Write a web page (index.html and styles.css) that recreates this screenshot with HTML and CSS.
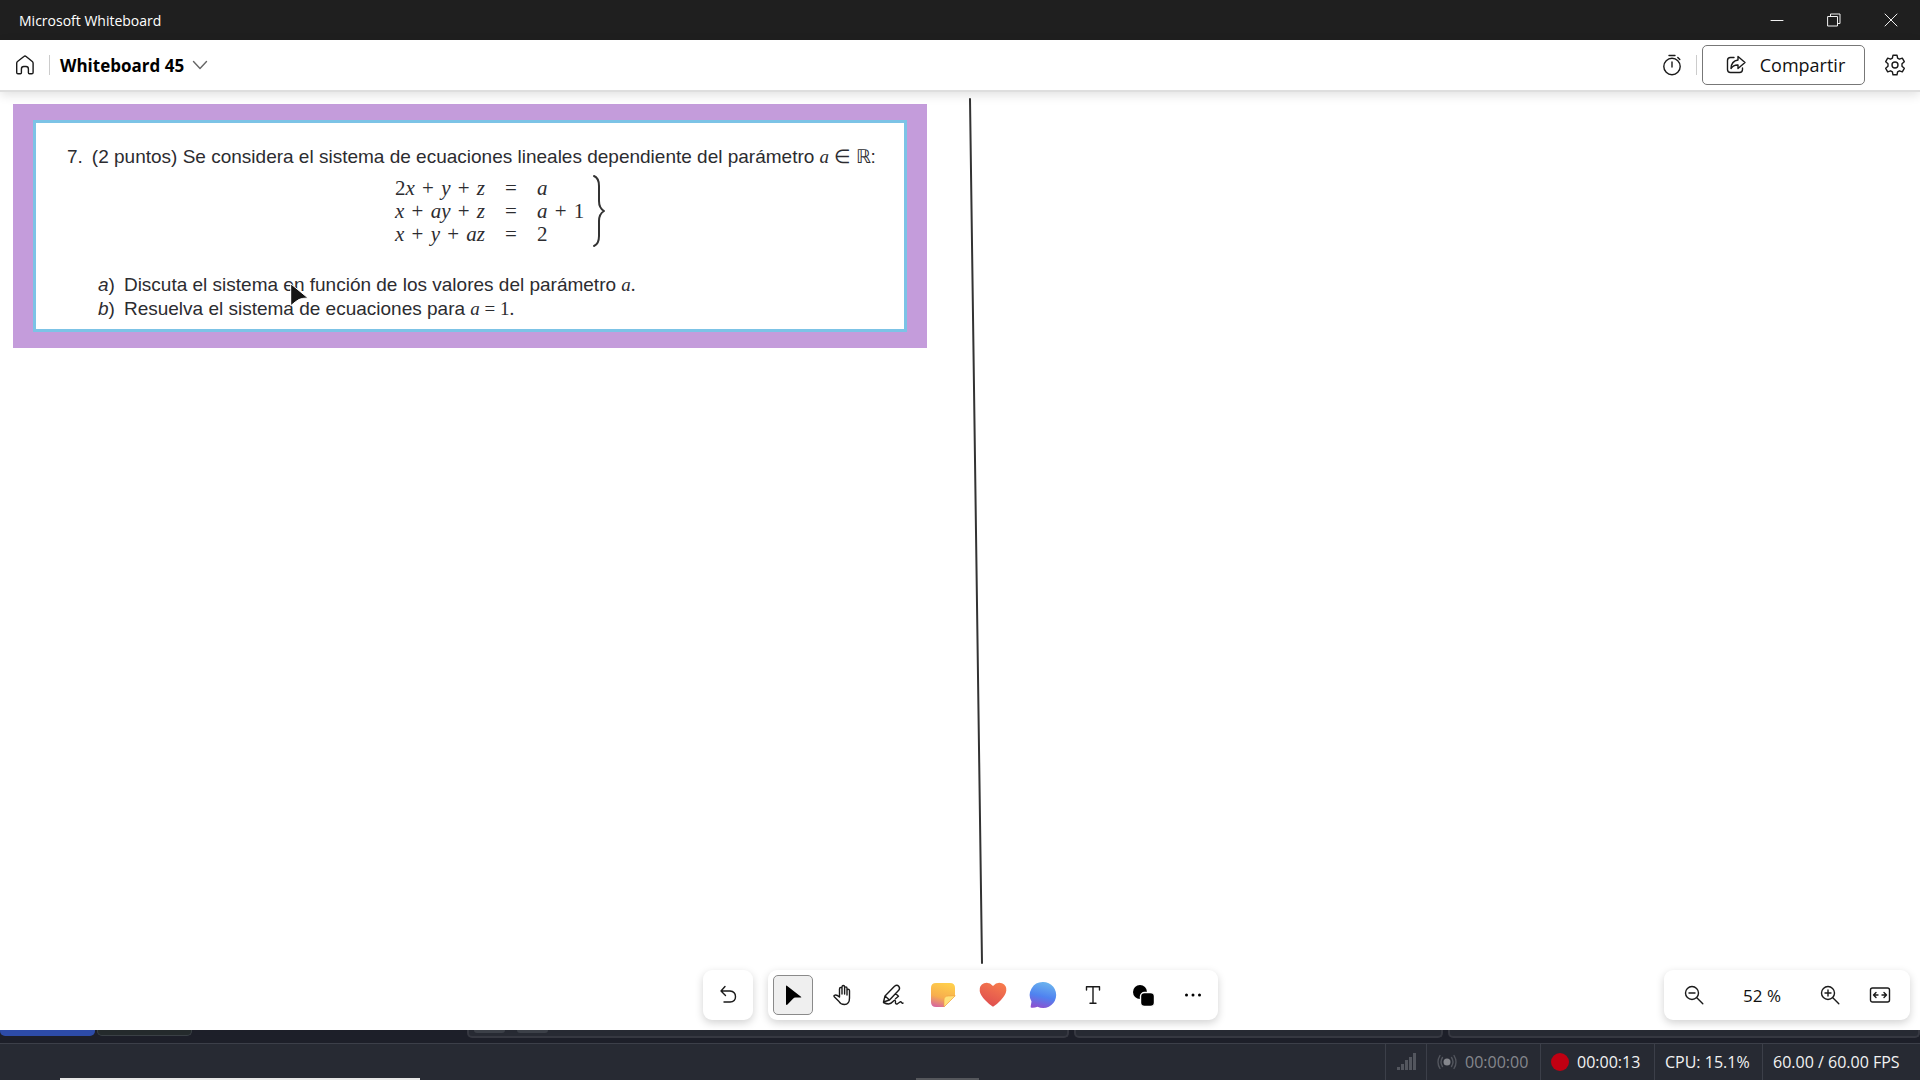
FILE: index.html
```html
<!DOCTYPE html>
<html lang="es">
<head>
<meta charset="utf-8">
<title>Microsoft Whiteboard</title>
<link rel="stylesheet" href="styles.css">
</head>
<body>
<div class="titlebar">
  <span class="app-name">Microsoft Whiteboard</span>
  <div class="window-controls">
    <button type="button" aria-label="Minimizar"><svg width="14" height="14" viewBox="0 0 14 14"><path d="M1 7.500h12"/></svg></button>
    <button type="button" aria-label="Restaurar"><svg width="14" height="14" viewBox="0 0 14 14"><path d="M1 3.500h9.500v9.500h-9.500zM3.500 3.500v-2.500h9.500v9.500h-2.500"/></svg></button>
    <button type="button" aria-label="Cerrar"><svg width="14" height="14" viewBox="0 0 14 14"><path d="M1 1l12 12M13 1L1 13"/></svg></button>
  </div>
</div>

<header class="header">
  <button class="icon-button" type="button" aria-label="Inicio"><svg width="20" height="20" viewBox="0 0 20 20"><path d="M1.700 8.200v9.300q0 1.300 1.300 1.300h2.400q1 0 1-1v-3.900q0-2.400 2.400-2.400h2.200q2.400 0 2.400 2.400v3.900q0 1 1 1h2.400q1.300 0 1.300-1.300v-9.300q0-1-.8-1.700l-6.200-5q-1.100-.9-2.200 0l-6.400 5q-.8.7-.8 1.700z"/></svg></button>
  <span class="separator"></span>
  <button class="board-name" type="button">Whiteboard 45 <svg width="16" height="16" viewBox="0 0 16 16"><path d="M1.500 4.500l6.500 7 6.500-7"/></svg></button>
  <div class="header-actions">
    <button class="icon-button" type="button" aria-label="Temporizador"><svg width="20" height="22" viewBox="0 0 20 22"><circle cx="10" cy="12.500" r="8.200"/><path d="M10 8v5M7 1.500h6M15.800 3.500l2 2"/></svg></button>
    <span class="separator"></span>
    <button class="share" type="button"><svg width="20" height="20" viewBox="0 0 20 20"><path d="M8 2.500H4.500q-3 0-3 3v9q0 3 3 3h9q3 0 3-3v-1.500M12 1.500l7 6-7 6v-3.500q-4.500-.3-7 3.500 .3-7.500 7-8.500z"/></svg>Compartir</button>
    <button class="icon-button" type="button" aria-label="Configuración"><svg width="22" height="22" viewBox="0 0 22 22"><path d="M9 1.200h4l.6 3 1.800 1 2.900-1 2 3.500-2.300 2v2.600l2.300 2-2 3.500-2.900-1-1.800 1-.6 3H9l-.6-3-1.800-1-2.900 1-2-3.500 2.300-2V9.700l-2.300-2 2-3.500 2.900 1 1.800-1z"/><circle cx="11" cy="11" r="3"/></svg></button>
  </div>
</header>

<main class="canvas">
  <article class="note">
    <div class="exercise">
      <p class="statement"><span>7.</span><span>(2 puntos) Se considera el sistema de ecuaciones lineales dependiente del parámetro <span class="math"><i>a</i> ∈ ℝ</span>:</span></p>
      <div class="system">
        <table class="equations">
          <tr><td>2<i>x</i> <span class="op">+</span> <i>y</i> <span class="op">+</span> <i>z</i></td><td>=</td><td><i>a</i></td></tr>
          <tr><td><i>x</i> <span class="op">+</span> <i>ay</i> <span class="op">+</span> <i>z</i></td><td>=</td><td><i>a</i> <span class="op">+</span> 1</td></tr>
          <tr><td><i>x</i> <span class="op">+</span> <i>y</i> <span class="op">+</span> <i>az</i></td><td>=</td><td>2</td></tr>
        </table>
        <svg class="brace" width="12" height="72" viewBox="0 0 12 72"><path d="M1 1q5 2 5 10v15q0 7 5 10q-5 3-5 10v15q0 8-5 10"/></svg>
      </div>
      <div class="questions">
        <p><span><i>a</i>)</span><span>Discuta el sistema en función de los valores del parámetro <span class="math"><i>a</i>.</span></span></p>
        <p><span><i>b</i>)</span><span>Resuelva el sistema de ecuaciones para <span class="math"><i>a</i> = 1.</span></span></p>
      </div>
    </div>
  </article>
  <svg class="stroke" width="16" height="868" viewBox="0 0 16 868"><path d="M2 1q2 200 6 433t6 431"/></svg>
  <svg class="pointer" width="20" height="24" viewBox="0 0 20 24"><path d="M1 1l17 14q-6 0-9 1.500t-8 6z"/></svg>

  <div class="tools">
    <div class="panel"><button class="tool" type="button" aria-label="Deshacer"><svg width="20" height="20" viewBox="0 0 20 20"><path d="M7 1.500L3 6l4.500 4.500M3 6h9q5.500.5 5.500 5.700 0 5-5.500 5.300H6"/></svg></button></div>
    <div class="panel">
      <button class="tool selected" type="button" aria-label="Seleccionar"><svg width="20" height="22" viewBox="0 0 20 22"><path class="solid" d="M3 2.500q0-1.500 1.200-.6L18 12.800q1 .8-.3.800h-5.200q-1.500 0-2.500 1.200l-5.500 5.700q-1.500 1-1.500-.6z"/></svg></button>
      <button class="tool" type="button" aria-label="Desplazar"><svg width="22" height="22" viewBox="0 0 22 22"><path d="M7.500 12.500V5q0-1.500 1.300-1.500T10 5v5V3q0-1.500 1.300-1.500T12.600 3v7V4.200q0-1.300 1.200-1.300T15 4.200V11 6.500q0-1.300 1.200-1.300t1.300 1.300V14q0 6.500-5 6.500-4 0-5.500-3L2.500 13q-1.300-1.500.3-1.800 1.800-.7 4.700 1.800z"/></svg></button>
      <button class="tool" type="button" aria-label="Entrada manuscrita"><svg width="22" height="22" viewBox="0 0 22 22"><path d="M1.500 18l1.500-6L12.500 2.300q2.500-2 4.200 0t0 4L7.500 16zM3 12l4.500 4M13.500 9.500l3 2.800-3 2.500M1.500 18.500q3 1.500 5 1.500 2.500-.2 4.500-2.500t2.500-.2q-.5 3.500 2 2.500l2.500-1.800q1-.5 1.500.5t1.500.5"/></svg></button>
      <button class="tool" type="button" aria-label="Notas"><svg width="24" height="24" viewBox="0 0 24 24"><defs><linearGradient id="sticky" x1=".6" y1="0" x2=".3" y2="1"><stop offset="0" stop-color="#ffce4b"/><stop offset=".6" stop-color="#f7ae4e"/><stop offset="1" stop-color="#d8699a"/></linearGradient></defs><path fill="url(#sticky)" stroke="none" d="M5 0h14q5 0 5 5v8l-11 11H5q-5 0-5-5V5q0-5 5-5z"/><path fill="#ffe17a" stroke="#f0a040" stroke-width=".6" d="M24 13l-11 11v-7q0-4 4-4z"/></svg></button>
      <button class="tool" type="button" aria-label="Reacciones"><svg width="28" height="26" viewBox="0 0 28 26"><defs><linearGradient id="heart" x1=".7" y1="0" x2=".2" y2="1"><stop offset="0" stop-color="#f67a4c"/><stop offset="1" stop-color="#dd4a50"/></linearGradient></defs><path fill="url(#heart)" stroke="none" d="M14 4q4-4.500 9-2.700 5 2.200 4.300 7.500-.5 4-5.300 9.200-4 4.400-8 6.800-4-2.400-8-6.800Q1.200 13 .700 9 0 3.500 5 1.300 10-.5 14 4z"/></svg></button>
      <button class="tool" type="button" aria-label="Comentarios"><svg width="26" height="26" viewBox="0 0 26 26"><defs><linearGradient id="bubble" x1=".6" y1="0" x2=".35" y2="1"><stop offset="0" stop-color="#6cb4ee"/><stop offset=".55" stop-color="#4f82f0"/><stop offset="1" stop-color="#8b52d0"/></linearGradient></defs><path fill="url(#bubble)" stroke="none" d="M13 0a13 13 0 1 1-5.500 24.700q-3 1.300-6 1-1.300-.2-.8-1.500l.8-4.700A13 13 0 0 1 13 0z"/></svg></button>
      <button class="tool" type="button" aria-label="Texto"><svg width="20" height="20" viewBox="0 0 20 20"><path d="M3.500 5V1.700h13V5M10 1.700v16.600M7 18.300h6"/></svg></button>
      <button class="tool" type="button" aria-label="Formas"><svg width="22" height="22" viewBox="0 0 22 22"><circle class="solid" cx="8" cy="8" r="7"/><rect class="solid outlined" x="8.500" y="8.500" width="14" height="14" rx="4"/></svg></button>
      <button class="tool" type="button" aria-label="Más opciones"><svg width="18" height="4" viewBox="0 0 18 4"><circle class="dot" cx="2.500" cy="2" r="1.500"/><circle class="dot" cx="9" cy="2" r="1.500"/><circle class="dot" cx="15.500" cy="2" r="1.500"/></svg></button>
    </div>
  </div>

  <div class="panel zoom">
    <button class="tool" type="button" aria-label="Alejar"><svg width="20" height="20" viewBox="0 0 20 20"><circle cx="8" cy="8" r="6.500"/><path d="M5 8h6M12.800 12.800l6 6"/></svg></button>
    <span class="zoom-level">52 %</span>
    <button class="tool" type="button" aria-label="Acercar"><svg width="20" height="20" viewBox="0 0 20 20"><circle cx="8" cy="8" r="6.500"/><path d="M5 8h6M8 5v6M12.800 12.800l6 6"/></svg></button>
    <button class="tool" type="button" aria-label="Ajustar a la pantalla"><svg width="22" height="18" viewBox="0 0 22 18"><rect x="1.500" y="2" width="19" height="14" rx="2"/><path d="M9 9H4.500M7 6.500L4.500 9 7 11.500M13 9h4.500M15 6.500L17.500 9 15 11.500"/></svg></button>
  </div>
</main>

<div class="dock-edge">
  <span class="edge-tab active"></span>
  <span class="edge-tab"></span>
  <div class="edge-docks">
    <span class="dock dock-mixer"><span class="chip"></span><span class="chip"></span></span>
    <span class="dock dock-transitions"></span>
    <span class="dock dock-controls"></span>
  </div>
</div>

<footer class="status">
  <span class="task-line"></span>
  <span class="task-handle"></span>
  <span class="cell cell-signal"><svg width="20" height="18" viewBox="0 0 20 18"><path d="M1 14h3v3H1zM5 11h3v6H5zM9 7h3v10H9zM13 4h3v13h-3zM17 0h3v17h-3z"/></svg></span>
  <span class="cell cell-timer muted"><svg width="20" height="16" viewBox="0 0 20 16"><circle class="core" cx="10" cy="8" r="3.500"/><path class="wave" d="M5.500 3.500q-3 4.500 0 9M14.500 3.500q3 4.500 0 9M3 1.500q-4 6.500 0 13M17 1.500q4 6.500 0 13"/></svg>00:00:00</span>
  <span class="cell cell-timer"><span class="record"></span>00:00:13</span>
  <span class="cell cell-cpu">CPU: 15.1%</span>
  <span class="cell cell-fps">60.00 / 60.00 FPS</span>
</footer>
</body>
</html>
```
FILE: styles.css
```css
* {
  box-sizing: border-box;
}

body {
  margin: 0;
  min-height: 100vh;
  display: flex;
  flex-direction: column;
  background: #fff;
  color: #111;
  font-family: "Open Sans", "Noto Sans", sans-serif;
}

button {
  display: flex;
  align-items: center;
  justify-content: center;
  margin: 0;
  padding: 0;
  border: 0;
  background: none;
  color: inherit;
  font: inherit;
}

p {
  margin: 0;
}

svg {
  display: block;
  flex: none;
  overflow: visible;
  fill: none;
  stroke: #1a1a1a;
  stroke-width: 1.4;
  stroke-linejoin: round;
  stroke-linecap: round;
}

/* Window title bar */
.titlebar {
  display: flex;
  align-items: center;
  justify-content: space-between;
  height: 40px;
  padding: 0 1px 0 19px;
  background: #1f1f1f;
  color: #fff;
  font-size: 14px;
}

.window-controls {
  display: flex;
}

.window-controls button {
  width: 57px;
  height: 40px;
}

.window-controls svg {
  stroke: #f0f0f0;
  stroke-width: 1;
}

/* Board header */
.header {
  position: relative;
  z-index: 1;
  display: flex;
  align-items: center;
  height: 52px;
  padding: 0 14px;
  border-bottom: 2px solid #dedede;
  background: #fff;
  box-shadow: 0 3px 10px rgba(0, 0, 0, 0.12);
}

.icon-button {
  width: 22px;
  height: 32px;
}

.separator {
  width: 1px;
  height: 20px;
  margin-left: 13px;
  background: #ccc;
}

.board-name {
  gap: 8px;
  margin-left: 10px;
  color: #000;
  font-size: 17px;
  font-weight: 700;
}

.board-name svg {
  stroke: #666;
}

.header-actions {
  display: flex;
  align-items: center;
  margin-left: auto;
}

.header-actions .separator {
  margin: 0 5px 0 13px;
}

.share {
  gap: 14px;
  width: 163px;
  height: 40px;
  margin-right: 19px;
  padding-left: 4px;
  border: 1px solid #777;
  border-radius: 5px;
  font-size: 18px;
}

/* Canvas objects */
.canvas {
  position: relative;
  flex: 1;
  overflow: hidden;
  background: #fff;
}

.note {
  position: absolute;
  top: 12px;
  left: 13px;
  padding: 16px 20px;
  background: #c49cdb;
}

.exercise {
  width: 874px;
  height: 212px;
  padding: 22px 31px 0;
  border: 3px solid #7cc3e6;
  background: #fff;
  color: #2c2c30;
  font-family: "Liberation Sans", sans-serif;
  font-size: 19px;
  line-height: 24px;
  white-space: nowrap;
}

.statement {
  display: flex;
  gap: 9px;
}

.math {
  font-family: "Liberation Serif", serif;
  line-height: 1;
}

.equations {
  border-collapse: collapse;
  font-family: "Liberation Serif", serif;
  font-size: 21px;
  line-height: 23px;
}

.equations td {
  padding: 0 20px 0 0;
}

.equations td:last-child {
  padding: 0;
}

.op {
  margin: 0 2px;
}

.system {
  display: flex;
  align-items: center;
  gap: 9px;
  padding: 6px 0 0 328px;
}

.brace {
  stroke: #333;
  stroke-width: 2;
}

.questions {
  padding: 26px 0 0 31px;
}

.questions p {
  display: flex;
  gap: 9px;
}

.stroke {
  position: absolute;
  top: 6px;
  left: 968px;
  stroke: #333;
  stroke-width: 2;
}

.pointer {
  position: absolute;
  top: 191px;
  left: 290px;
  fill: #151515;
  stroke: #fff;
  stroke-width: 1;
}

/* Floating toolbars */
.tools {
  position: absolute;
  right: 0;
  bottom: 10px;
  left: 1px;
  display: flex;
  justify-content: center;
  gap: 15px;
}

.panel {
  display: flex;
  align-items: center;
  gap: 10px;
  padding: 5px;
  border-radius: 9px;
  background: #fff;
  box-shadow: 0 3px 9px rgba(0, 0, 0, 0.18);
}

.tool {
  width: 40px;
  height: 40px;
  border-radius: 5px;
}

.selected {
  border: 1px solid #8a8a8a;
  background: #efefef;
}

.solid {
  fill: #000;
  stroke: none;
}

.outlined {
  stroke: #fff;
}

.dot {
  fill: #000;
  stroke: none;
}

.zoom {
  position: absolute;
  right: 10px;
  bottom: 10px;
  width: 246px;
  padding: 5px 10px;
}

.zoom-level {
  flex: 1;
  text-align: center;
  font-size: 17px;
}

/* Recorder window behind the board */
.dock-edge {
  display: flex;
  height: 13px;
  background: #1d1f29;
}

.edge-tab {
  width: 95px;
  height: 6px;
  margin-right: 2px;
  border: 1px solid #3a4045;
  border-top: 0;
  border-radius: 0 0 5px 5px;
  background: #242a2c;
}

.active {
  border: 0;
  background: #2d4ba8;
}

.edge-docks {
  flex: 1;
  display: flex;
  gap: 5px;
  margin-left: 273px;
}

.dock {
  display: flex;
  gap: 12px;
  height: 8px;
  padding-left: 5px;
  border: 2px solid #363841;
  border-top: 0;
  border-radius: 0 0 5px 5px;
  background: #272a33;
}

.dock-mixer {
  flex: 606;
}

.dock-transitions {
  flex: 367;
}

.dock-controls {
  flex: 473;
}

.chip {
  width: 31px;
  height: 3px;
  border-radius: 0 0 3px 3px;
  background: #3c4048;
}

.status {
  position: relative;
  display: flex;
  justify-content: flex-end;
  height: 37px;
  border-top: 1px solid #3c3f49;
  background: #272a33;
  color: #f2f2f2;
  font-size: 16px;
}

.cell {
  display: flex;
  align-items: center;
  gap: 8px;
  padding-left: 10px;
  border-left: 1px solid #3c3f49;
  white-space: nowrap;
}

.cell-signal {
  width: 41px;
}

.cell-timer {
  width: 114px;
}

.cell-cpu {
  width: 108px;
}

.cell-fps {
  width: 158px;
}

.cell svg {
  fill: #53565e;
  stroke: none;
}

.muted {
  color: #85878d;
}

.muted .core {
  fill: #85878d;
}

.muted .wave {
  fill: none;
  stroke: #53565e;
}

.record {
  width: 18px;
  height: 18px;
  border-radius: 50%;
  background: #c00012;
}

.task-line,
.task-handle {
  position: absolute;
  bottom: 0;
  height: 2px;
}

.task-line {
  left: 60px;
  width: 360px;
  background: #e8e8e8;
}

.task-handle {
  left: 916px;
  width: 63px;
  background: #55575c;
}
```
